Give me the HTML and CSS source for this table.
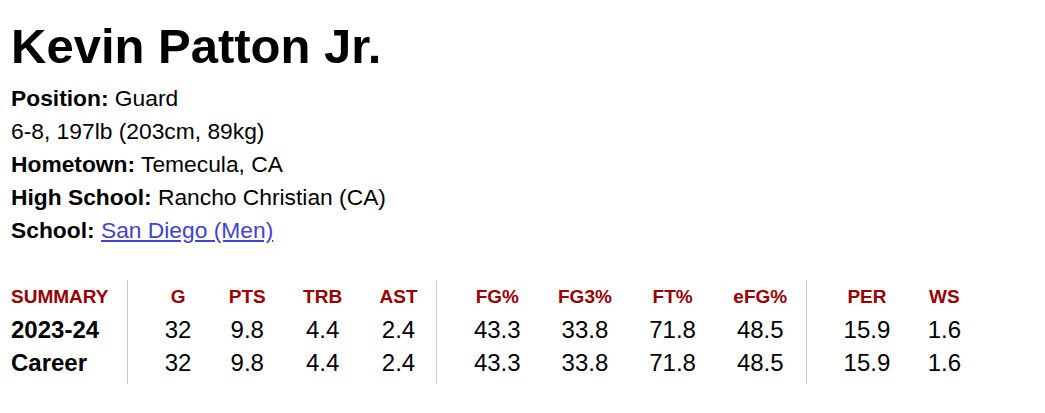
FILE: index.html
```html
<!DOCTYPE html>
<html>
<head>
<meta charset="utf-8">
<link rel="stylesheet" href="styles.css">
</head>
<body>
<div class="player">
  <h1 class="name">Kevin Patton Jr.</h1>
  <div class="info">
    <p><strong>Position:</strong> Guard</p>
    <p>6-8, 197lb (203cm, 89kg)</p>
    <p><strong>Hometown:</strong> Temecula, CA</p>
    <p><strong>High School:</strong> Rancho Christian (CA)</p>
    <p><strong>School:</strong> <a href="#">San Diego (Men)</a></p>
  </div>
  <div class="pullout">
    <div class="group labels">
      <div class="col">
        <h4>SUMMARY</h4>
        <p>2023-24</p>
        <p>Career</p>
      </div>
    </div>
    <div class="group">
      <div class="col"><h4>G</h4><p>32</p><p>32</p></div>
      <div class="col"><h4>PTS</h4><p>9.8</p><p>9.8</p></div>
      <div class="col"><h4>TRB</h4><p>4.4</p><p>4.4</p></div>
      <div class="col"><h4>AST</h4><p>2.4</p><p>2.4</p></div>
    </div>
    <div class="group">
      <div class="col"><h4>FG%</h4><p>43.3</p><p>43.3</p></div>
      <div class="col"><h4>FG3%</h4><p>33.8</p><p>33.8</p></div>
      <div class="col"><h4>FT%</h4><p>71.8</p><p>71.8</p></div>
      <div class="col"><h4>eFG%</h4><p>48.5</p><p>48.5</p></div>
    </div>
    <div class="group">
      <div class="col"><h4>PER</h4><p>15.9</p><p>15.9</p></div>
      <div class="col"><h4>WS</h4><p>1.6</p><p>1.6</p></div>
    </div>
  </div>
</div>
</body>
</html>
```

FILE: styles.css
```css
body {
  margin: 8px;
  font-family: "Liberation Sans", Arial, sans-serif;
  color: #000;
  background: #fff;
}
.player {
  padding-left: 3px;
}
.name {
  font-size: 49px;
  font-weight: bold;
  line-height: 55px;
  margin: 11px 0 8px 0;
}
.info p {
  margin: 0;
  font-size: 22.8px;
  line-height: 33px;
}
.info strong {
  font-weight: bold;
}
.info a {
  color: #4343cc;
  text-decoration: underline;
}
.pullout {
  display: flex;
  margin-top: 33px;
}
.group {
  display: flex;
  border-left: 1px solid #cccccc;
  padding-left: 18px;
  padding-bottom: 5px;
}
.group.labels {
  border-left: none;
  padding-left: 0;
  padding-right: 18px;
}
.labels .col {
  text-align: left;
  padding: 0;
  width: 98px;
}
.labels .col p {
  font-weight: bold;
}
.col {
  display: flex;
  flex-direction: column;
  text-align: center;
  padding: 0 18.7px;
}
.col h4 {
  margin: 0;
  font-size: 19px;
  line-height: 33px;
  font-weight: bold;
  color: #990000;
}
.col p {
  margin: 0;
  font-size: 24px;
  line-height: 33px;
}
```
